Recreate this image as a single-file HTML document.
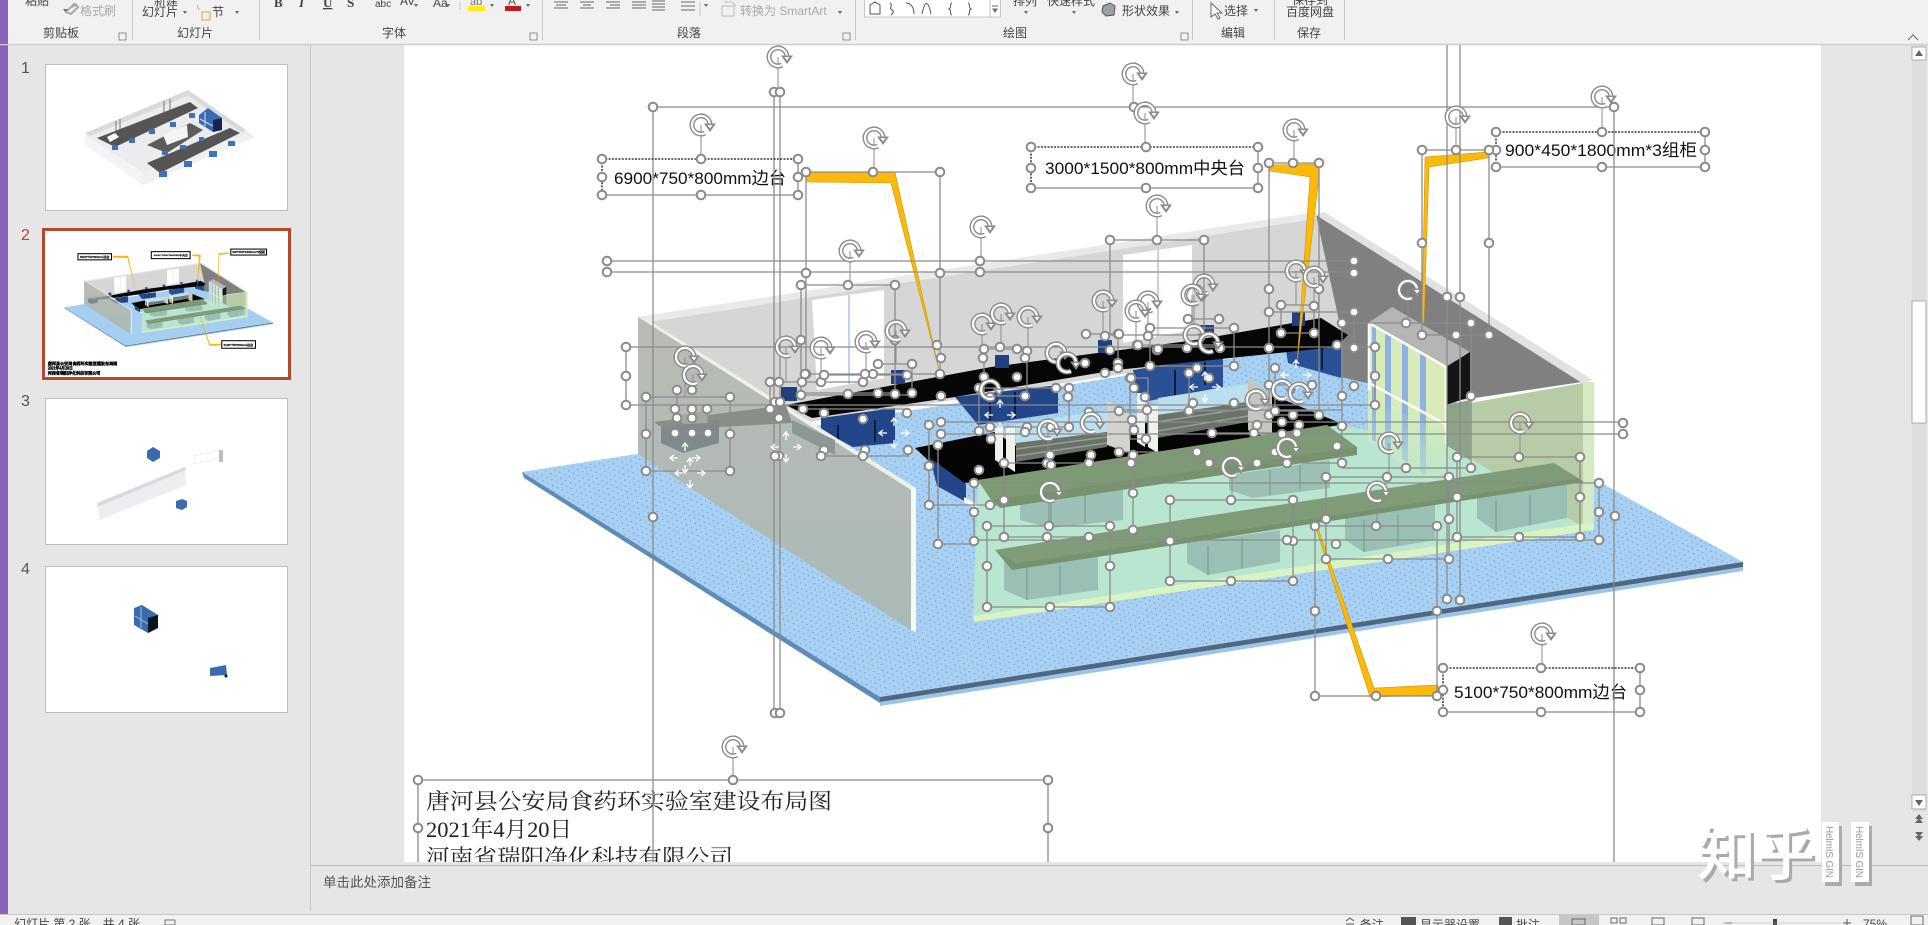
<!DOCTYPE html>
<html lang="zh"><head><meta charset="utf-8"><title>PowerPoint</title>
<style>
html,body{margin:0;padding:0;width:1928px;height:925px;overflow:hidden;background:#e6e6e6}
svg{display:block;font-family:"Liberation Sans","Noto Sans CJK SC",sans-serif}
.h circle{r:4.300px;fill:#fff;stroke:#8b8b8b;stroke-width:2}
.rb{font-size:12px;fill:#444}
.lb{font-size:17px;fill:#111}
.bt{font-family:"Liberation Serif","Noto Serif CJK SC",serif;font-size:22px;fill:#222}
</style></head><body>
<svg width="1928" height="925" viewBox="0 0 1928 925" xmlns="http://www.w3.org/2000/svg">
<defs>
<pattern id="dots" width="9" height="6" patternUnits="userSpaceOnUse" patternTransform="rotate(-9)">
<rect width="9" height="6" fill="#a8d0f2"/><circle cx="2" cy="2" r=".7" fill="#6f9fce"/><circle cx="6.5" cy="5" r=".7" fill="#7dabd8"/>
</pattern>
<linearGradient id="lw" x1="0" y1="0" x2="0" y2="1"><stop offset="0" stop-color="#b9bbb3"/><stop offset="1" stop-color="#aabab8"/></linearGradient>
<linearGradient id="fade" x1="0" y1="0" x2="0" y2="1"><stop offset="0" stop-color="#b9e6d0" stop-opacity="0"/><stop offset="1" stop-color="#b9e6d0"/></linearGradient>
<g id="r"><path d="M9 0A9 9 0 1 0 4 8" fill="none" stroke="#8b8b8b" stroke-width="5"/><path d="M9 0A9 9 0 1 0 4 8" fill="none" stroke="#fff" stroke-width="2.200"/><path d="M3 -1.500H15L9 7Z" fill="#8b8b8b"/><path d="M6.500 0H11.500L9 3.500Z" fill="#fff"/></g>
<path id="mv" d="M0 -15V-7M-3 -11L0 -15L3 -11M0 15V7M-3 11L0 15L3 11M-15 0H-7M-11 -3L-15 0L-11 3M15 0H7M11 -3L15 0L11 3" fill="none" stroke="#fff" stroke-width="1.300"/>
<g id="scene">
<polygon points="522,472 790,430 1345,340 1743,562 880,697" fill="url(#dots)"/>
<polygon points="522,472 880,697 880,703 524,478" fill="#5f8bb8"/>
<polygon points="880,697 1743,562 1743,567 880,702" fill="#4d6880"/>
<polygon points="880,702 1743,567 1743,571 880,706" fill="#9cc4ea"/>
<polygon points="638,317 1316,215 1345,340 790,425" fill="#d6d6d6"/>
<polygon points="638,317 1316,212 1322,218 650,322" fill="#e9e9e9"/>
<polygon points="812,300 884,290 884,378 817,390" fill="#fff"/><path d="M849 295V384" stroke="#a8c6e8" stroke-width="1.500"/>
<polygon points="1123,255 1192,245 1192,330 1123,343" fill="#fff"/><path d="M1158 250V337" stroke="#a8c6e8" stroke-width="1.500"/>
<polygon points="1316,215 1582,382 1448,402 1341,377 1341,330" fill="#808080"/>
<polygon points="1316,215 1324,212 1593,380 1582,383" fill="#e2e2e2"/>
<polygon points="955,397 1058,385 1058,413 978,425" fill="#23468a"/>
<polygon points="821,418 895,408 895,443 853,447 821,430" fill="#23468a"/>
<polygon points="1133,370 1223,356 1223,387 1138,403" fill="#2a5096"/>
<polygon points="1285,345 1341,340 1341,378 1288,363" fill="#2a5096"/>
<path d="M838 425V445M875 420V442M990 395V420M1015 392V418M1175 370V395M1205 362V385M1322 345V370" stroke="#0c1c40" stroke-width="2"/>
<polygon points="786,405 991,367 1196,340 1321,318 1348,335 1336,347 1116,370 955,397 812,418" fill="#060606"/>
<g fill="#21407f"><rect x="781" y="387" width="16" height="14"/><rect x="891" y="370" width="14" height="14"/><rect x="995" y="355" width="14" height="13"/><rect x="1098" y="340" width="14" height="13"/><rect x="1200" y="325" width="14" height="10"/><rect x="1292" y="312" width="13" height="14"/></g>
<polygon points="915,448 995,432 1016,446 1107,432 1158,420 1250,400 1272,395 1345,425 1300,450 964,483 930,462" fill="#050505"/>
<polygon points="930,458 966,484 966,502 937,486" fill="#23468a"/>
<polygon points="964,497 978,505 978,510 964,502" fill="#fff"/>
<polygon points="1016,424 1107,410 1107,432 1016,443" fill="#bcdff0"/>
<polygon points="1158,398 1248,384 1248,402 1158,415" fill="#bcdff0"/>
<polygon points="1016,443 1107,432 1107,447 1016,462" fill="#6a726a"/>
<path d="M1016 449L1107 437M1016 456L1107 443" stroke="#98a094" stroke-width="1.500"/>
<polygon points="1157,415 1248,402 1248,422 1157,438" fill="#6a726a"/>
<path d="M1157 422L1248 408M1157 431L1248 416" stroke="#98a094" stroke-width="1.500"/>
<g fill="#f1f1ec"><polygon points="995,427 1003,427 1003,465 995,460"/><polygon points="1006,427 1015,427 1015,472 1006,466"/><polygon points="1137,393 1145,393 1145,447 1137,442"/><polygon points="1148,405 1158,405 1158,453 1148,447"/></g>
<polygon points="1107,400 1130,412 1130,453 1107,445" fill="#d2d2cf"/><polygon points="1248,378 1272,395 1272,440 1248,430" fill="#c4c6c0"/>
<polygon points="638,317 650,321 916,488 911,490" fill="#f0f0ea"/>
<polygon points="638,317 911,490 911,630 638,454" fill="url(#lw)"/>
<polygon points="654,422 786,405 792,423 665,430" fill="#898e86"/>
<polygon points="661,428 719,420 719,443 683,453 661,443" fill="#7f8a8d"/>
<polygon points="792,420 835,440 835,455 792,433" fill="#8d9894"/>
<polygon points="676,416 710,410 708,423 684,424" fill="#a3a8a0"/>
<polygon points="911,488 916,488 916,632 911,630" fill="#f4faf6"/>
<polygon points="978,480 1340,425 1446,445 1470,458 1583,527 973,620" fill="#b9e6d0"/>
<polygon points="1470,403 1583,383 1583,527 1470,458" fill="#b7cba6"/>
<polygon points="1583,382 1594,382 1594,528 1583,527" fill="#d5e9c2"/>
<polygon points="973,616 1594,522 1594,530 975,622" fill="#d9f3c2"/>
<polygon points="1368,323 1392,307 1470,352 1446,367" fill="#b5b5b5"/>
<polygon points="1446,367 1470,352 1470,397 1446,405" fill="#151515"/>
<polygon points="1446,405 1470,400 1470,460 1446,445" fill="#8da388"/>
<polygon points="1368,323 1446,367 1446,495 1368,440" fill="#d8ebb8"/>
<g fill="#8fb0e2"><polygon points="1385,333 1391,337 1391,452 1385,448"/><polygon points="1402,343 1408,346 1408,463 1402,459"/><polygon points="1420,353 1426,356 1426,476 1420,472"/><polygon points="1372,325 1376,328 1376,442 1372,440"/></g>
<path d="M1369 323L1446 367V445M1369 383L1445 424M1369 323V390" fill="none" stroke="#fff" stroke-width="2.500"/>
<polygon points="1368,400 1446,430 1446,495 1368,440" fill="url(#fade)"/>
<polygon points="1020,503 1123,487 1123,520 1051,528 1020,520" fill="#9cc0b5"/>
<polygon points="1229,475 1330,460 1330,488 1253,498 1229,490" fill="#9cc0b5"/>
<path d="M1051 500V528M1085 495V523M1270 470V495M1300 465V490" stroke="#7fa59a" stroke-width="1.500"/>
<polygon points="978,480 1327,425 1357,447 1357,453 1000,507 993,503" fill="#7d9a74"/>
<polygon points="993,500 1357,447 1357,455 1000,508" fill="#76926f"/>
<polygon points="1004,555 1098,540 1098,590 1027,600 1004,590" fill="#9ac0b6"/>
<polygon points="1187,543 1280,530 1280,562 1208,575 1187,563" fill="#9ac0b6"/>
<polygon points="1345,517 1435,505 1435,540 1364,552 1345,540" fill="#9ac0b6"/>
<polygon points="1477,497 1567,485 1567,518 1496,532 1477,518" fill="#9ac0b6"/>
<path d="M1027 568V600M1060 565V595M1208 545V575M1242 538V568M1364 520V552M1398 515V545M1496 500V532M1530 495V525" stroke="#7fa59a" stroke-width="1.500"/>
<polygon points="995,550 1200,517 1554,463 1578,478 1016,563" fill="#7f9b78"/>
<polygon points="995,550 1016,563 1578,478 1584,482 1012,570" fill="#76926f"/>
</g>
<g id="ylines" fill="#fbb909" stroke="#c9950d" stroke-width=".6">
<polygon points="806,172 895,172 939,370 891,183 806,182"/>
<polygon points="1270,165 1319,164 1319,177 1297,363 1310,177 1270,171"/>
<polygon points="1425,157 1488,152 1488,158 1429,167 1424,323 1422,323"/>
<polygon points="1316,528 1318,528 1374,688 1438,685 1438,695 1370,697"/>
</g>
<g id="lbls">
<text class="lb" x="614" y="184" textLength="172" lengthAdjust="spacingAndGlyphs">6900*750*800mm边台</text>
<text class="lb" x="1045" y="174" textLength="200" lengthAdjust="spacingAndGlyphs">3000*1500*800mm中央台</text>
<text class="lb" x="1505" y="156" textLength="192" lengthAdjust="spacingAndGlyphs">900*450*1800mm*3组柜</text>
<text class="lb" x="1454" y="698" textLength="173" lengthAdjust="spacingAndGlyphs">5100*750*800mm边台</text>
</g>
<g id="btxt">
<text class="bt" x="426" y="809" textLength="406" lengthAdjust="spacingAndGlyphs">唐河县公安局食药环实验室建设布局图</text>
<text class="bt" x="426" y="837" textLength="146" lengthAdjust="spacingAndGlyphs">2021年4月20日</text>
<text class="bt" x="426" y="865" textLength="307" lengthAdjust="spacingAndGlyphs">河南省瑞阳净化科技有限公司</text>
</g>
<clipPath id="slide"><rect x="404" y="45" width="1417" height="817"/></clipPath>
</defs>

<!-- base -->
<rect width="1928" height="925" fill="#e6e6e6"/>
<rect x="404" y="45" width="1417" height="817" fill="#fff"/>

<!-- main slide content -->
<g clip-path="url(#slide)">
<use href="#scene"/><use href="#ylines"/>
<use href="#lbls"/><use href="#btxt"/>
<path fill="none" stroke="#8b8b8b" stroke-width="1.300" d="M653 107H1614M653 107V862M1614 107V862M774 92V713M780 92V713M1447 45V599M1460 45V599M806 172H940V374H806ZM1269 163H1319V415H1269ZM1422 150H1489V335H1422ZM1315 526H1437V696H1315ZM607 261H1354M607 272H1354M801 285H895V393H801ZM1110 240H1204V335H1110ZM626 347H1375V405H626ZM646 397H730V471H646ZM677 390V433H708V409M929 425V505H1000M938 445V544H975M941 422H1623M941 434H1623M987 526H1110V607H987ZM1170 500H1293V581H1170ZM1326 477H1449V559H1326ZM1457 457H1580V537H1457ZM974 483H1599V540H974ZM1004 463H1133V537H1004ZM1031 188H1258V147M602 195H798V159M1496 167H1705V132M1443 712H1640V668M418 780H1048M418 780V862M1048 780V862M770 382H865M801 395H912M878 364H912V393M803 409H907M984 349H1027V396H984ZM1086 334H1118V368M1187 319H1219M1281 305H1314V333H1281ZM1269 312H1354V348M1342 323H1471V468H1342ZM1119 410H1342M1138 345H1220M1150 328H1234V366H1150ZM1212 433H1297M1119 452H1275M1131 463H1342M1089 412H1145M979 388H1069V427H979ZM1130 378V439H1148V378ZM821 456H908V450M824 375H907M770 382V409M1189 373V411H1234M1275 368V411H1319M1269 385H1312"/>
<path fill="none" stroke="#8b8b8b" stroke-width="1" d="M778 57V92M1133 74V107M1145 113V147M701 125V159M874 138V172M981 227V261M1157 206V240M850 251V285M1103 301V334M1148 302V336M1136 311V345M1194 295V328M1001 314V347M982 324V349M1028 317V351M896 331V364M866 342V374M821 348V382M786 347V382M685 357V397M693 375V390M1204 285V319M1192 295V328M1296 271V305M1314 277V312M1408 290V323M1456 117V150M1602 97V132M1294 130V163M1520 423V457M1389 443V477M1377 492V526M1542 634V668M733 747V780M1049 492V526M1232 467V500M1048 430V463"/>
<path fill="none" stroke="#111" stroke-width="1.300" stroke-dasharray="2 1.300" d="M602 159H798M602 159V195M1031 147H1258M1031 147V188M1496 132H1705M1496 132V167M1443 668H1640M1443 668V712"/>
<g class="h">
<circle cx="602" cy="159"/><circle cx="701" cy="159"/><circle cx="798" cy="159"/><circle cx="602" cy="177"/><circle cx="798" cy="177"/><circle cx="602" cy="195"/><circle cx="701" cy="195"/><circle cx="798" cy="195"/>
<circle cx="1031" cy="147"/><circle cx="1146" cy="147"/><circle cx="1258" cy="147"/><circle cx="1031" cy="168"/><circle cx="1258" cy="168"/><circle cx="1031" cy="188"/><circle cx="1146" cy="188"/><circle cx="1258" cy="188"/>
<circle cx="1496" cy="132"/><circle cx="1602" cy="132"/><circle cx="1705" cy="132"/><circle cx="1496" cy="150"/><circle cx="1705" cy="150"/><circle cx="1496" cy="167"/><circle cx="1602" cy="167"/><circle cx="1705" cy="167"/>
<circle cx="1443" cy="668"/><circle cx="1541" cy="668"/><circle cx="1640" cy="668"/><circle cx="1443" cy="690"/><circle cx="1640" cy="690"/><circle cx="1443" cy="712"/><circle cx="1541" cy="712"/><circle cx="1640" cy="712"/>
<circle cx="418" cy="780"/><circle cx="733" cy="780"/><circle cx="1048" cy="780"/><circle cx="418" cy="828"/><circle cx="1048" cy="828"/>
<circle cx="653" cy="107"/><circle cx="1134" cy="107"/><circle cx="1614" cy="107"/><circle cx="653" cy="517"/><circle cx="1615" cy="516"/>
<circle cx="774" cy="92"/><circle cx="780" cy="92"/><circle cx="775" cy="713"/><circle cx="780" cy="713"/><circle cx="775" cy="402"/><circle cx="780" cy="402"/><circle cx="779" cy="418"/>
<circle cx="1447" cy="297"/><circle cx="1460" cy="297"/><circle cx="1447" cy="599"/><circle cx="1460" cy="600"/>
<circle cx="1422" cy="150"/><circle cx="1456" cy="150"/><circle cx="1489" cy="150"/><circle cx="1422" cy="243"/><circle cx="1489" cy="243"/><circle cx="1422" cy="335"/><circle cx="1456" cy="335"/><circle cx="1489" cy="335"/>
<circle cx="806" cy="172"/><circle cx="873" cy="172"/><circle cx="940" cy="172"/><circle cx="806" cy="273"/><circle cx="940" cy="273"/><circle cx="806" cy="374"/><circle cx="873" cy="374"/><circle cx="940" cy="374"/>
<circle cx="1269" cy="163"/><circle cx="1293" cy="163"/><circle cx="1319" cy="163"/><circle cx="1269" cy="289"/><circle cx="1319" cy="289"/><circle cx="1269" cy="415"/><circle cx="1293" cy="415"/><circle cx="1319" cy="415"/>
<circle cx="1315" cy="526"/><circle cx="1376" cy="526"/><circle cx="1437" cy="526"/><circle cx="1315" cy="611"/><circle cx="1437" cy="611"/><circle cx="1315" cy="696"/><circle cx="1376" cy="696"/><circle cx="1437" cy="696"/>
<circle cx="607" cy="261"/><circle cx="607" cy="272"/><circle cx="980" cy="261"/><circle cx="980" cy="272"/><circle cx="1354" cy="261"/><circle cx="1354" cy="273"/>
<circle cx="801" cy="285"/><circle cx="848" cy="285"/><circle cx="895" cy="285"/><circle cx="801" cy="340"/><circle cx="895" cy="340"/>
<circle cx="1110" cy="240"/><circle cx="1157" cy="240"/><circle cx="1204" cy="240"/>
<circle cx="626" cy="347"/><circle cx="626" cy="376"/><circle cx="626" cy="405"/><circle cx="1375" cy="347"/><circle cx="1375" cy="376"/><circle cx="1375" cy="405"/>
<circle cx="646" cy="397"/><circle cx="730" cy="397"/><circle cx="646" cy="434"/><circle cx="730" cy="434"/><circle cx="646" cy="471"/><circle cx="730" cy="471"/>
<circle cx="677" cy="390"/><circle cx="692" cy="390"/><circle cx="707" cy="409"/><circle cx="675" cy="409"/><circle cx="677" cy="418"/><circle cx="692" cy="418"/><circle cx="675" cy="433"/><circle cx="692" cy="433"/><circle cx="708" cy="433"/><circle cx="692" cy="409"/>
<circle cx="1623" cy="423"/><circle cx="1623" cy="434"/><circle cx="929" cy="425"/><circle cx="941" cy="422"/><circle cx="941" cy="434"/><circle cx="929" cy="466"/><circle cx="929" cy="505"/><circle cx="990" cy="505"/><circle cx="938" cy="445"/><circle cx="938" cy="544"/>
<circle cx="987" cy="526"/><circle cx="1049" cy="526"/><circle cx="1110" cy="526"/><circle cx="987" cy="566"/><circle cx="1110" cy="566"/><circle cx="987" cy="607"/><circle cx="1050" cy="607"/><circle cx="1110" cy="607"/>
<circle cx="1170" cy="500"/><circle cx="1231" cy="500"/><circle cx="1293" cy="500"/><circle cx="1170" cy="541"/><circle cx="1293" cy="541"/><circle cx="1170" cy="581"/><circle cx="1231" cy="581"/><circle cx="1293" cy="581"/>
<circle cx="1326" cy="477"/><circle cx="1387" cy="477"/><circle cx="1449" cy="477"/><circle cx="1326" cy="519"/><circle cx="1449" cy="519"/><circle cx="1326" cy="559"/><circle cx="1388" cy="559"/><circle cx="1449" cy="559"/>
<circle cx="1457" cy="457"/><circle cx="1519" cy="457"/><circle cx="1580" cy="457"/><circle cx="1580" cy="497"/><circle cx="1457" cy="537"/><circle cx="1519" cy="537"/><circle cx="1580" cy="537"/><circle cx="1457" cy="497"/>
<circle cx="1599" cy="483"/><circle cx="1599" cy="512"/><circle cx="1599" cy="540"/><circle cx="1336" cy="544"/><circle cx="1287" cy="540"/><circle cx="974" cy="483"/><circle cx="974" cy="512"/><circle cx="974" cy="541"/>
<circle cx="1004" cy="500"/><circle cx="1004" cy="463"/><circle cx="1004" cy="537"/><circle cx="1047" cy="537"/><circle cx="1089" cy="537"/><circle cx="1133" cy="530"/><circle cx="1133" cy="493"/><circle cx="1133" cy="456"/><circle cx="1089" cy="463"/><circle cx="1047" cy="463"/>
<circle cx="937" cy="345"/><circle cx="941" cy="358"/><circle cx="941" cy="396"/><circle cx="984" cy="349"/><circle cx="983" cy="358"/><circle cx="1000" cy="347"/><circle cx="1017" cy="349"/><circle cx="1027" cy="351"/><circle cx="1025" cy="358"/><circle cx="984" cy="377"/><circle cx="1017" cy="377"/><circle cx="979" cy="388"/><circle cx="990" cy="397"/><circle cx="1025" cy="396"/><circle cx="1056" cy="388"/><circle cx="1069" cy="388"/><circle cx="1068" cy="397"/><circle cx="1085" cy="363"/><circle cx="1118" cy="363"/><circle cx="1118" cy="368"/><circle cx="1105" cy="373"/><circle cx="1086" cy="334"/><circle cx="1105" cy="336"/><circle cx="1118" cy="334"/><circle cx="1110" cy="350"/><circle cx="1137" cy="345"/><circle cx="1157" cy="350"/><circle cx="1150" cy="366"/><circle cx="1187" cy="348"/><circle cx="1189" cy="373"/><circle cx="1130" cy="378"/><circle cx="1134" cy="388"/><circle cx="1145" cy="397"/><circle cx="1147" cy="410"/><circle cx="1132" cy="420"/><circle cx="1134" cy="430"/><circle cx="1146" cy="439"/><circle cx="1119" cy="411"/><circle cx="1089" cy="412"/><circle cx="1069" cy="427"/><circle cx="1051" cy="427"/><circle cx="1027" cy="427"/><circle cx="1025" cy="432"/><circle cx="990" cy="427"/><circle cx="979" cy="431"/><circle cx="991" cy="439"/><circle cx="979" cy="470"/><circle cx="1050" cy="455"/><circle cx="1051" cy="465"/><circle cx="1091" cy="455"/><circle cx="1119" cy="452"/><circle cx="1133" cy="455"/>
<circle cx="770" cy="382"/><circle cx="779" cy="382"/><circle cx="802" cy="382"/><circle cx="805" cy="374"/><circle cx="821" cy="382"/><circle cx="824" cy="375"/><circle cx="863" cy="382"/><circle cx="865" cy="374"/><circle cx="878" cy="364"/><circle cx="912" cy="364"/><circle cx="907" cy="375"/><circle cx="801" cy="395"/><circle cx="848" cy="394"/><circle cx="878" cy="393"/><circle cx="895" cy="394"/><circle cx="912" cy="393"/><circle cx="803" cy="409"/><circle cx="824" cy="413"/><circle cx="863" cy="419"/><circle cx="907" cy="413"/><circle cx="770" cy="409"/><circle cx="908" cy="450"/><circle cx="865" cy="450"/><circle cx="824" cy="450"/><circle cx="821" cy="456"/><circle cx="863" cy="456"/><circle cx="779" cy="456"/><circle cx="775" cy="456"/>
<circle cx="1119" cy="334"/><circle cx="1148" cy="336"/><circle cx="1150" cy="328"/><circle cx="1188" cy="319"/><circle cx="1219" cy="319"/><circle cx="1234" cy="328"/><circle cx="1281" cy="305"/><circle cx="1314" cy="306"/><circle cx="1269" cy="312"/><circle cx="1354" cy="312"/><circle cx="1281" cy="333"/><circle cx="1314" cy="333"/><circle cx="1342" cy="323"/><circle cx="1406" cy="323"/><circle cx="1471" cy="323"/><circle cx="1269" cy="348"/><circle cx="1337" cy="345"/><circle cx="1354" cy="348"/><circle cx="1354" cy="386"/><circle cx="1342" cy="396"/><circle cx="1471" cy="396"/><circle cx="1342" cy="426"/><circle cx="1337" cy="446"/><circle cx="1342" cy="463"/><circle cx="1406" cy="468"/><circle cx="1471" cy="468"/><circle cx="1138" cy="345"/><circle cx="1158" cy="349"/><circle cx="1220" cy="348"/><circle cx="1234" cy="366"/><circle cx="1275" cy="368"/><circle cx="1269" cy="385"/><circle cx="1312" cy="385"/><circle cx="1234" cy="403"/><circle cx="1197" cy="368"/><circle cx="1209" cy="378"/><circle cx="1189" cy="411"/><circle cx="1193" cy="403"/><circle cx="1131" cy="378"/><circle cx="1212" cy="433"/><circle cx="1254" cy="433"/><circle cx="1257" cy="425"/><circle cx="1275" cy="411"/><circle cx="1282" cy="422"/><circle cx="1299" cy="425"/><circle cx="1282" cy="434"/><circle cx="1297" cy="433"/><circle cx="1197" cy="452"/><circle cx="1209" cy="463"/><circle cx="1257" cy="463"/><circle cx="1275" cy="452"/><circle cx="1287" cy="463"/><circle cx="1131" cy="463"/>
</g>
<use href="#mv" x="894" y="433"/><use href="#mv" x="786" y="447"/><use href="#mv" x="685" y="458"/><use href="#mv" x="690" y="473"/><use href="#mv" x="1296" y="375"/><use href="#mv" x="1205" y="387"/><use href="#mv" x="1000" y="415"/>
<use href="#r" x="778" y="57"/><use href="#r" x="1133" y="74"/><use href="#r" x="1145" y="113"/><use href="#r" x="701" y="125"/><use href="#r" x="874" y="138"/><use href="#r" x="981" y="227"/><use href="#r" x="1157" y="206"/><use href="#r" x="850" y="251"/><use href="#r" x="1103" y="301"/><use href="#r" x="1148" y="302"/><use href="#r" x="1136" y="311"/><use href="#r" x="1194" y="295"/><use href="#r" x="1001" y="314"/><use href="#r" x="982" y="324"/><use href="#r" x="1028" y="317"/><use href="#r" x="896" y="331"/><use href="#r" x="866" y="342"/><use href="#r" x="821" y="348"/><use href="#r" x="786" y="347"/><use href="#r" x="685" y="357"/><use href="#r" x="693" y="375"/><use href="#r" x="1056" y="353"/><use href="#r" x="1067" y="363"/><use href="#r" x="1194" y="335"/><use href="#r" x="990" y="390"/><use href="#r" x="1204" y="285"/><use href="#r" x="1192" y="295"/><use href="#r" x="1209" y="343"/><use href="#r" x="1296" y="271"/><use href="#r" x="1314" y="277"/><use href="#r" x="1408" y="290"/><use href="#r" x="1456" y="117"/><use href="#r" x="1602" y="97"/><use href="#r" x="1294" y="130"/><use href="#r" x="1520" y="423"/><use href="#r" x="1389" y="443"/><use href="#r" x="1256" y="400"/><use href="#r" x="1282" y="390"/><use href="#r" x="1299" y="393"/><use href="#r" x="1287" y="448"/><use href="#r" x="1232" y="467"/><use href="#r" x="1048" y="430"/><use href="#r" x="1091" y="423"/><use href="#r" x="1050" y="492"/><use href="#r" x="1377" y="492"/><use href="#r" x="1542" y="634"/><use href="#r" x="733" y="747"/>
</g>

<!-- right gutter -->
<rect x="1821" y="45" width="107" height="820" fill="#e6e6e6"/>
<rect x="1912" y="45" width="14" height="767" fill="#dedede"/>
<rect x="1912" y="47" width="14" height="13" fill="#fff" stroke="#ababab"/><path d="M1919 50l-4 6h8z" fill="#666"/>
<rect x="1912" y="301" width="14" height="122" fill="#fff" stroke="#ababab"/>
<rect x="1912" y="795" width="14" height="14" fill="#fff" stroke="#ababab"/><path d="M1915 800h8l-4 6z" fill="#666"/>
<path d="M1919 814l-4 5h8zM1919 818l-4 5h8z" fill="#666"/><path d="M1915 832h8l-4 5zM1915 836h8l-4 5z" fill="#666"/>

<!-- notes -->
<rect x="310" y="862" width="1618" height="52" fill="#e6e6e6"/>
<path d="M310 865.500H1928" stroke="#bdbdbd"/>
<path d="M310.500 45V911" stroke="#c6c6c6"/>
<text x="323" y="887" font-size="13.500" fill="#555">单击此处添加备注</text>

<!-- thumbnails -->
<rect x="8" y="45" width="302" height="869" fill="#e6e6e6"/>
<g font-size="16" fill="#555"><text x="21" y="73">1</text><text x="21" y="406">3</text><text x="21" y="574">4</text></g>
<text x="21" y="240" font-size="16" fill="#b7472a">2</text>
<rect x="45.500" y="64.500" width="242" height="146" fill="#fff" stroke="#bdbdbd"/>
<rect x="43.500" y="229.500" width="246" height="149" fill="#fff" stroke="#b7472a" stroke-width="3"/>
<rect x="45.500" y="398.500" width="242" height="146" fill="#fff" stroke="#bdbdbd"/>
<rect x="45.500" y="566.500" width="242" height="146" fill="#fff" stroke="#bdbdbd"/>
<polygon points="85,135 188,92 255,137 143,185" fill="#ececee"/>
<polygon points="85,135 143,172 143,185 85,145" fill="#f4f4f6"/><polygon points="143,172 246,134 255,137 143,185" fill="#f0f0f1"/>
<polygon points="85,133 188,90 192,94 90,136" fill="#dadadc"/><polygon points="188,90 246,130 242,133 186,94" fill="#dadadc"/>
<path d="M116 121V132M120 119V130M164 101V112M170 99V110" stroke="#777" stroke-width="1"/>
<polygon points="97,138 190,102 198,108 115,147" fill="#555"/><polygon points="147,163 230,128 240,133 160,173" fill="#555"/><polygon points="147,145 190,123 203,130 167,153" fill="#5c5c5c"/>
<polygon points="163,135 187,125 188,137 167,145" fill="#f4f4f4"/><polygon points="107,137 115,133 119,137 110,142" fill="#fff"/>
<polygon points="199,115 208,108 222,118 222,130 213,132 199,123" fill="#3a6bb0"/><polygon points="213,120 222,118 222,130 213,132" fill="#16284a"/><path d="M205 112V126M200 119L213 126" stroke="#cfe0f5"/>
<g fill="#3d72bc"><rect x="112" y="145" width="6" height="5"/><rect x="129" y="138" width="6" height="5"/><rect x="149" y="129" width="6" height="5"/><rect x="170" y="122" width="6" height="5"/><rect x="189" y="113" width="6" height="5"/><rect x="159" y="171" width="8" height="6"/><rect x="184" y="161" width="8" height="6"/><rect x="209" y="151" width="8" height="6"/><rect x="228" y="141" width="7" height="5"/><rect x="162" y="151" width="6" height="4"/><rect x="180" y="145" width="6" height="4"/><rect x="199" y="137" width="5" height="4"/></g>
<g transform="translate(-25 226.500) scale(.171)"><use href="#scene"/><use href="#ylines"/><g stroke="#000" stroke-width="6" fill="#fff"><rect x="602" y="159" width="196" height="36"/><rect x="1031" y="147" width="227" height="41"/><rect x="1496" y="132" width="209" height="35"/><rect x="1443" y="668" width="197" height="44"/></g><g stroke="#333" stroke-width="2"><use href="#lbls"/></g><g stroke="#000" stroke-width="3"><use href="#btxt"/></g></g>
<polygon points="97,503 185,467 186,485 100,520" fill="#eeeef2"/><polygon points="97,503 185,467 186,470 97,507" fill="#d9d9de"/>
<polygon points="153,447 160,451 160,458 153,462 147,458 147,451" fill="#3a6bb0"/><polygon points="182,499 187,501 187,507 182,510 176,508 176,501" fill="#3a6bb0"/>
<path d="M194 456L220 450V458L194 464Z" fill="none" stroke="#f0f0e8"/><rect x="219" y="450" width="4" height="12" fill="#bdbdbd"/>
<polygon points="134,608 142,605 158,615 158,628 148,633 134,625" fill="#3a6bb0"/><polygon points="148,618 158,615 158,628 148,633" fill="#0d1420"/><path d="M135 616L148 624M141 607V628" stroke="#9cc0e8"/>
<polygon points="210,668 226,665 227,675 210,676" fill="#3a6bb0"/><circle cx="226" cy="676" r="1.500" fill="#111"/>

<!-- left accent -->
<rect width="8" height="925" fill="#8a63b8"/>

<!-- ribbon -->
<rect width="1928" height="44" fill="#f1f1f1"/><path d="M0 44.500H1928" stroke="#cfcfcf" stroke-width="1.500"/><rect width="8" height="44" fill="#8a63b8"/>
<path d="M132.500 0V40M259.500 0V40M542.500 0V40M855.500 0V40M1192.500 0V40M1274.500 0V40M1344.500 0V40M460 2V10M700 2V16" stroke="#c8c8c8"/>
<g class="rb">
<text x="25" y="5">粘贴</text><text x="154" y="5">新建</text><text x="142" y="16">幻灯片</text><text x="212" y="16">节</text>
<text x="43" y="37">剪贴板</text><text x="177" y="37">幻灯片</text><text x="382" y="37">字体</text><text x="677" y="37">段落</text><text x="1003" y="37">绘图</text><text x="1221" y="37">编辑</text><text x="1297" y="37">保存</text>
<text x="1013" y="5">排列</text><text x="1047" y="5">快速样式</text><text x="1122" y="15">形状效果</text><text x="1224" y="15">选择</text><text x="1292" y="4">保存到</text><text x="1286" y="16">百度网盘</text>
<text x="433" y="7">Aa</text><text x="375" y="7" font-size="10">abc</text><text x="400" y="5">AV</text>
</g>
<g fill="#aaa" font-size="12"><text x="80" y="15">格式刷</text><text x="740" y="15">转换为 SmartArt</text></g>
<g font-family="Liberation Serif,serif" font-size="13" font-weight="bold" fill="#444"><text x="274" y="7">B</text><text x="299" y="7" font-style="italic">I</text><text x="323" y="7" text-decoration="underline">U</text><text x="347" y="7">S</text></g>
<path d="M63 9l3 4 3-4zM183 11l2 3 2-3zM235 11l2 3 2-3zM414 4l2 3 2-3zM446 4l2 3 2-3zM490 4l2 3 2-3zM526 4l2 3 2-3zM838 11l2 3 2-3zM1024 11l2 3 2-3zM1072 11l2 3 2-3zM1175 11l2 3 2-3zM1254 9l2 3 2-3zM704 4l2 3 2-3z" fill="#666"/>
<path d="M554 2h14M556 5h10M554 8h14M580 2h14M583 5h8M580 8h14M606 2h14M610 5h10M606 8h14M632 2h14M632 5h14M632 8h14M652 1h13M652 4h13M652 7h13M652 10h13M681 2h14M681 6h14M681 10h14" stroke="#666"/>
<rect x="468" y="6" width="17" height="5" fill="#ffec17"/><text x="470" y="5" font-size="11" fill="#777">ab</text>
<rect x="505" y="6" width="16" height="5" fill="#c8161d"/><text x="508" y="5" font-size="12" fill="#555">A</text>
<path d="M66 12l8-8 4 3-7 7zM72 7l5-3" stroke="#aaa" fill="none" stroke-width="2"/>
<path d="M197 5l2 5M202 12h8v8h-8z" fill="none" stroke="#e8a03a"/>
<path d="M722 6h12v10h-12zM724 2h8l4 4" fill="none" stroke="#bbb"/>
<rect x="864.500" y="-2" width="136" height="19" fill="#fff" stroke="#c6c6c6"/>
<path d="M870 5l5-3 5 3v9h-10zM890 3c4 2-2 5 2 7s-2 4 0 5M906 3c6 0 8 6 8 11M922 14c3-14 6-14 9 0M952 3c-3 1 0 5-3 6 3 1 0 5 3 6M968 3c3 1 0 5 3 6-3 1 0 5-3 6" fill="none" stroke="#555"/>
<path d="M990 0v17" stroke="#c6c6c6"/><path d="M992 6h6M993 9l2 3 2-3z" fill="#666" stroke="#666"/>
<path d="M1103 6l7-3 5 3-1 9-8 1-4-4z" fill="#9aa0a6" stroke="#555"/>
<path d="M1211 3v14l4-3 3 5 2-1-3-5h5z" fill="#fff" stroke="#666"/>
<path d="M1908 40l5-5 5 5" fill="none" stroke="#666"/>
<path d="M119 33h7v7h-7zM530 33h7v7h-7zM843 33h7v7h-7zM1181 33h7v7h-7z" fill="none" stroke="#777" stroke-width=".8"/>

<!-- status bar -->
<rect y="914" width="1928" height="11" fill="#f1f1f1"/><path d="M0 914.500H1928" stroke="#c6c6c6"/>
<g font-size="12" fill="#444">
<text x="14" y="928">幻灯片 第 2 张，共 4 张</text>
<text x="1360" y="929">备注</text><text x="1420" y="929">显示器设置</text><text x="1516" y="929">批注</text><text x="1863" y="928">75%</text>
</g>
<path d="M165 920h10v5h-10z" fill="none" stroke="#777"/>
<path d="M1346 921l4-3 4 3M1346 924h8" fill="none" stroke="#555"/>
<rect x="1401" y="917" width="15" height="8" fill="#555"/><rect x="1499" y="917" width="13" height="8" fill="#555"/>
<rect x="1559" y="915" width="40" height="10" fill="#c6c6c6"/>
<path d="M1572 919h13v6h-13zM1611 918h6v5h-6zM1620 918h6v5h-6zM1652 918h12v7h-12zM1692 918h12v7h-12zM1911 916h12v9h-12z" fill="none" stroke="#666"/>
<path d="M1725 923h7M1843 923h8M1847 919v8" stroke="#555"/><rect x="1773" y="919" width="4" height="6" fill="#444"/><path d="M1722 923H1842" stroke="#aaa" stroke-width=".5"/>

<!-- watermark -->
<g font-family="Noto Sans CJK SC,sans-serif" font-size="59" font-weight="500"><text x="1700" y="878" fill="#aaa">知乎</text><text x="1697" y="875" fill="#fff">知乎</text></g>
<rect x="1825" y="826" width="17" height="60" fill="#aaa"/><rect x="1822" y="822" width="17" height="60" fill="#fff"/>
<rect x="1855" y="826" width="17" height="60" fill="#aaa"/><rect x="1851" y="822" width="18" height="60" fill="#fff"/>
<g font-size="10" fill="#999"><text transform="translate(1826 826) rotate(90)" textLength="52">HelmIS GIN</text><text transform="translate(1856 826) rotate(90)" textLength="52">HelmIS GIN</text></g>
</svg>
</body></html>
